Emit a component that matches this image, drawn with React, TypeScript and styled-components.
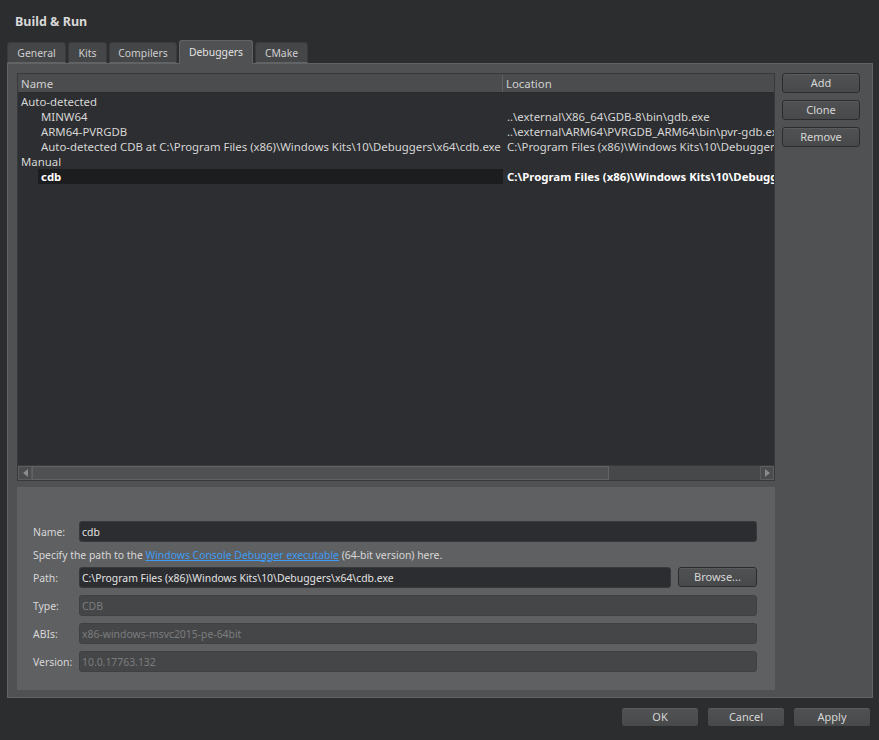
import React from "react";
import styled, { createGlobalStyle } from "styled-components";

const Global = createGlobalStyle`
  html, body { margin: 0; padding: 0; background: #2c2d2f; }
  body { font-family: "Noto Sans", "Open Sans", sans-serif; font-size: 11px; line-height: 14px; color: #d6d6d6; }
  * { box-sizing: border-box; }
`;

const Window = styled.div`
  width: 879px;
  height: 740px;
  background: #2c2d2f;
  display: flex;
  flex-direction: column;
  overflow: hidden;
`;

const Title = styled.div`
  font-weight: bold;
  font-size: 12.5px;
  line-height: 16px;
  color: #d8d8d8;
  padding: 14px 15px 0;
  height: 40px;
`;

const TabBar = styled.div`
  display: flex;
  align-items: flex-end;
  gap: 2px;
  margin-left: 7px;
  height: 23px;
  position: relative;
  z-index: 1;
`;

const Tab = styled.div<{ $active?: boolean; $w: number }>`
  width: ${(p) => p.$w}px;
  height: ${(p) => (p.$active ? 24 : 21)}px;
  margin-bottom: ${(p) => (p.$active ? -1 : 0)}px;
  display: flex;
  align-items: center;
  justify-content: center;
  font-size: 10.4px;
  background: ${(p) => (p.$active ? "#505153" : "#454648")};
  border: 1px solid ${(p) => (p.$active ? "#626365" : "#3a3b3d")};
  border-bottom: ${(p) => (p.$active ? "none" : "1px solid #626365")};
  border-radius: 3px 3px 0 0;
  color: ${(p) => (p.$active ? "#e2e2e2" : "#cfcfcf")};
  padding-bottom: ${(p) => (p.$active ? 2 : 0)}px;
`;

const Panel = styled.div`
  margin: 0 6px 0 7px;
  height: 635px;
  background: #505153;
  border: 1px solid #626365;
  padding: 9px 12px 6px 9px;
  display: grid;
  grid-template-columns: 758px 78px;
  column-gap: 7px;
`;

const LeftCol = styled.div`
  display: flex;
  flex-direction: column;
  gap: 6px;
  min-height: 0;
  min-width: 0;
`;

const Tree = styled.div`
  height: 408px;
  display: flex;
  flex-direction: column;
  background: #2d2e31;
  border: 1px solid #38393b;
  font-size: 11.4px;
  overflow: hidden;
`;

const Header = styled.div`
  display: grid;
  grid-template-columns: 485px minmax(0, 1fr);
  height: 19px;
  background: #4b4c4e;
  border-bottom: 1px solid #2a2b2d;
  padding-top: 1px;
`;

const HeaderCell = styled.div<{ $divider?: boolean }>`
  display: flex;
  align-items: center;
  padding-left: 3px;
  color: #d0d0d0;
  border-right: ${(p) => (p.$divider ? "1px solid #606163" : "none")};
`;

const Body = styled.div`
  flex: 1;
  padding-top: 1px;
  overflow: hidden;
`;

const Row = styled.div`
  display: grid;
  grid-template-columns: 485px minmax(0, 1fr);
  height: 15px;
  white-space: nowrap;
`;

const NameCell = styled.div<{ $indent?: boolean }>`
  display: flex;
  align-items: center;
  padding-left: ${(p) => (p.$indent ? 23 : 3)}px;
  overflow: hidden;
`;

const NameText = styled.span<{ $selected?: boolean }>`
  display: flex;
  align-items: center;
  height: 15px;
  flex: 1;
  margin-left: ${(p) => (p.$selected ? -3 : 0)}px;
  padding-left: ${(p) => (p.$selected ? 3 : 0)}px;
  background: ${(p) => (p.$selected ? "#1c1d1f" : "transparent")};
  font-weight: ${(p) => (p.$selected ? "bold" : "normal")};
  color: ${(p) => (p.$selected ? "#ffffff" : "#d6d6d6")};
`;

const LocCell = styled.div<{ $selected?: boolean }>`
  display: flex;
  align-items: center;
  padding-left: 4px;
  overflow: hidden;
  font-weight: ${(p) => (p.$selected ? "bold" : "normal")};
  color: ${(p) => (p.$selected ? "#ffffff" : "#d6d6d6")};
`;

const HScroll = styled.div`
  height: 15px;
  display: flex;
  background: #47484a;
  border-top: 1px solid #3a3b3d;
`;

const ArrowBtn = styled.div`
  width: 14px;
  display: flex;
  align-items: center;
  justify-content: center;
  background: #4b4c4e;
  border: 1px solid #5c5d5f;
`;

const Handle = styled.div`
  width: 577px;
  background: #505153;
  border: 1px solid #626365;
`;

const Track = styled.div`
  flex: 1;
`;

const Details = styled.div`
  height: 203px;
  background: #5f6062;
  padding: 34px 18px 0 16px;
  display: grid;
  grid-template-columns: 46px 1fr;
  grid-auto-rows: min-content;
  row-gap: 7px;
  font-size: 10.4px;
`;

const Label = styled.div`
  display: flex;
  align-items: center;
  height: 21px;
  color: #d8d8d8;
`;

const Input = styled.div<{ $disabled?: boolean }>`
  height: 21px;
  display: flex;
  align-items: center;
  padding-left: 2px;
  border-radius: 3px;
  background: ${(p) => (p.$disabled ? "#454648" : "#2c2d30")};
  border: 1px solid ${(p) => (p.$disabled ? "#3f4042" : "#38393b")};
  color: ${(p) => (p.$disabled ? "#7c7d7f" : "#e4e4e4")};
  flex: 1;
  white-space: nowrap;
`;

const Hint = styled.div`
  grid-column: 1 / -1;
  height: 11px;
  display: flex;
  align-items: center;
  color: #d8d8d8;
  white-space: pre;
`;

const Link = styled.a`
  color: #3d9cf5;
  text-decoration: underline;
`;

const PathRow = styled.div`
  display: flex;
  gap: 7px;
`;

const Button = styled.div<{ $w?: number }>`
  width: ${(p) => (p.$w ? `${p.$w}px` : "100%")};
  height: 20px;
  display: flex;
  align-items: center;
  justify-content: center;
  font-size: 11px;
  background: linear-gradient(#505153, #48494b);
  border: 1px solid #2b2c2e;
  border-radius: 3px;
  color: #d6d6d6;
  box-shadow: inset 0 1px 0 #5a5b5d;
`;

const SideButtons = styled.div`
  display: flex;
  flex-direction: column;
  gap: 7px;
`;

const Footer = styled.div`
  display: flex;
  justify-content: flex-end;
  gap: 8px;
  padding: 9px 8px 0 0;
`;

const rows = [
  { name: "Auto-detected", loc: "", indent: false },
  { name: "MINW64", loc: "..\\external\\X86_64\\GDB-8\\bin\\gdb.exe", indent: true },
  { name: "ARM64-PVRGDB", loc: "..\\external\\ARM64\\PVRGDB_ARM64\\bin\\pvr-gdb.exe", indent: true },
  {
    name: "Auto-detected CDB at C:\\Program Files (x86)\\Windows Kits\\10\\Debuggers\\x64\\cdb.exe",
    loc: "C:\\Program Files (x86)\\Windows Kits\\10\\Debuggers\\x64\\cdb.exe",
    indent: true,
  },
  { name: "Manual", loc: "", indent: false },
  { name: "cdb", loc: "C:\\Program Files (x86)\\Windows Kits\\10\\Debuggers\\x64\\cdb.exe", indent: true, selected: true },
];

const tabs = [
  { label: "General", w: 59 },
  { label: "Kits", w: 39 },
  { label: "Compilers", w: 68 },
  { label: "Debuggers", w: 74, active: true },
  { label: "CMake", w: 53 },
];

export default function App() {
  return (
    <Window>
      <Global />
      <Title>Build &amp; Run</Title>
      <TabBar>
        {tabs.map((t) => (
          <Tab key={t.label} $w={t.w} $active={t.active}>
            {t.label}
          </Tab>
        ))}
      </TabBar>
      <Panel>
        <LeftCol>
          <Tree>
            <Header>
              <HeaderCell $divider>Name</HeaderCell>
              <HeaderCell>Location</HeaderCell>
            </Header>
            <Body>
              {rows.map((r) => (
                <Row key={r.name}>
                  <NameCell $indent={r.indent}>
                    <NameText $selected={r.selected}>{r.name}</NameText>
                  </NameCell>
                  <LocCell $selected={r.selected}>{r.loc}</LocCell>
                </Row>
              ))}
            </Body>
            <HScroll>
              <ArrowBtn>
                <svg width="5" height="8" viewBox="0 0 5 8">
                  <path d="M5 0 L0 4 L5 8 Z" fill="#8a8b8d" />
                </svg>
              </ArrowBtn>
              <Handle />
              <Track />
              <ArrowBtn>
                <svg width="5" height="8" viewBox="0 0 5 8">
                  <path d="M0 0 L5 4 L0 8 Z" fill="#8a8b8d" />
                </svg>
              </ArrowBtn>
            </HScroll>
          </Tree>
          <Details>
            <Label>Name:</Label>
            <Input>cdb</Input>
            <Hint>
              {"Specify the path to the "}
              <Link>Windows Console Debugger executable</Link>
              {" (64-bit version) here."}
            </Hint>
            <Label>Path:</Label>
            <PathRow>
              <Input>C:\Program Files (x86)\Windows Kits\10\Debuggers\x64\cdb.exe</Input>
              <Button $w={79}>Browse...</Button>
            </PathRow>
            <Label>Type:</Label>
            <Input $disabled>CDB</Input>
            <Label>ABIs:</Label>
            <Input $disabled>x86-windows-msvc2015-pe-64bit</Input>
            <Label>Version:</Label>
            <Input $disabled>10.0.17763.132</Input>
          </Details>
        </LeftCol>
        <SideButtons>
          <Button>Add</Button>
          <Button>Clone</Button>
          <Button>Remove</Button>
        </SideButtons>
      </Panel>
      <Footer>
        <Button $w={78}>OK</Button>
        <Button $w={78}>Cancel</Button>
        <Button $w={78}>Apply</Button>
      </Footer>
    </Window>
  );
}
